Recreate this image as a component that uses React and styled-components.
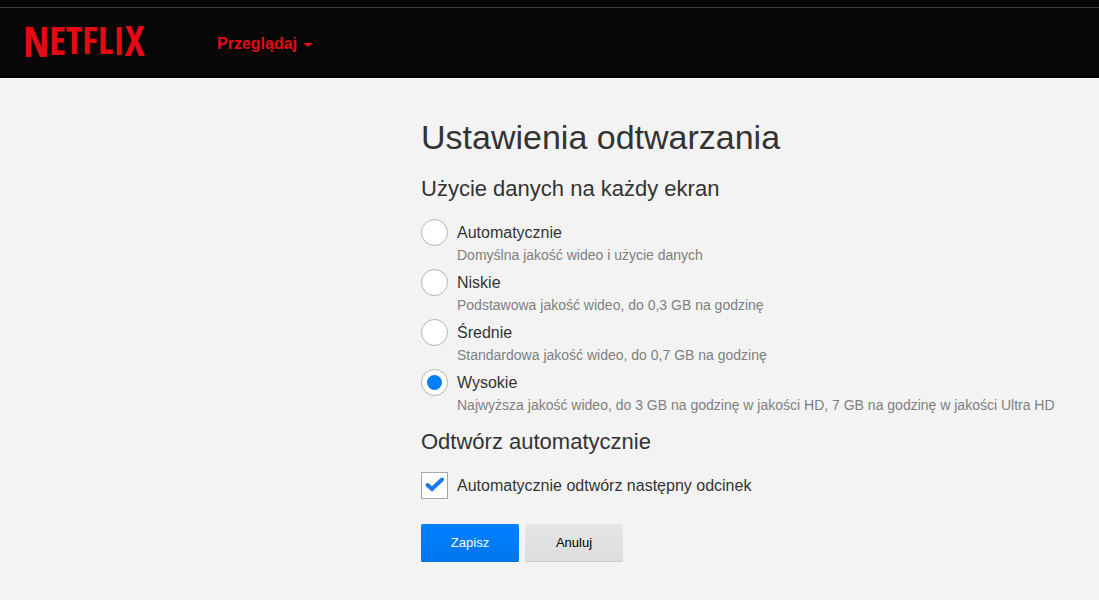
import React, { useState } from "react";
import styled, { createGlobalStyle } from "styled-components";

const colors = {
  header: "#070707",
  headerLine: "#3a3a3a",
  page: "#f3f3f3",
  brand: "#e50914",
  primary: "#0080ff",
  text: "#333333",
  muted: "#808080",
  border: "#b3b3b3",
};

const GlobalStyle = createGlobalStyle`
  * {
    box-sizing: border-box;
  }

  body {
    margin: 0;
    background: ${colors.page};
    color: ${colors.text};
    font-family: "Liberation Sans", Arial, Helvetica, sans-serif;
  }
`;

const TopStrip = styled.div`
  height: 8px;
  background: #050505;
  border-bottom: 1px solid ${colors.headerLine};
`;

const Header = styled.header`
  display: flex;
  align-items: center;
  height: 70px;
  padding: 4px 24px 0;
  background: ${colors.header};
  border-bottom: 2px solid #000000;
`;

const LogoLink = styled.a`
  display: block;
  margin-right: 65px;

  svg {
    display: block;
  }
`;

const LogoText = styled.text`
  fill: ${colors.brand};
  font-family: "Open Sans Condensed", "Roboto Condensed", "Noto Sans Condensed", Lato, sans-serif;
  font-weight: 700;
`;

const BrowseButton = styled.button`
  display: flex;
  align-items: center;
  gap: 6px;
  padding: 0;
  border: 0;
  background: none;
  color: ${colors.brand};
  font-family: inherit;
  font-size: 16px;
  font-weight: 700;
  line-height: 20px;
  cursor: pointer;
`;

const Caret = styled.span`
  margin-top: 2px;
  border: 5px solid transparent;
  border-top: 4px solid ${colors.brand};
  border-bottom: 0;
`;

const Main = styled.main`
  padding: 38px 24px 38px 421px;
`;

const Title = styled.h1`
  margin: 0 0 18px;
  font-size: 34px;
  font-weight: 400;
  line-height: 42px;
`;

const Group = styled.fieldset`
  min-width: 0;
  margin: 0 0 10px;
  padding: 0;
  border: 0;
`;

const GroupTitle = styled.legend`
  margin: 0 0 17px;
  padding: 0;
  font-size: 22px;
  line-height: 26px;
`;

const Option = styled.div`
  margin-bottom: 5px;
`;

const OptionLabel = styled.label`
  display: flex;
  align-items: center;
  gap: 9px;
  font-size: 16px;
  line-height: 27px;
  cursor: pointer;
`;

const Hint = styled.p`
  margin: 0;
  padding-left: 36px;
  color: ${colors.muted};
  font-size: 14px;
  line-height: 18px;
`;

const Radio = styled.input`
  appearance: none;
  display: grid;
  place-items: center;
  flex: none;
  width: 27px;
  height: 27px;
  margin: 0;
  border: 1px solid ${colors.border};
  border-radius: 50%;
  background: #ffffff;
  cursor: pointer;

  &:checked::before {
    content: "";
    width: 15px;
    height: 15px;
    border-radius: 50%;
    background: ${colors.primary};
  }
`;

const CheckWrapper = styled.span`
  display: grid;
  flex: none;

  > * {
    grid-area: 1 / 1;
  }
`;

const Checkbox = styled.input`
  appearance: none;
  width: 27px;
  height: 27px;
  margin: 0;
  border: 1px solid #a6a6a6;
  background: #ffffff;
  cursor: pointer;

  &:not(:checked) + svg {
    display: none;
  }
`;

const CheckMark = styled.svg`
  pointer-events: none;
`;

const Actions = styled.div`
  display: flex;
  gap: 6px;
  margin-top: 25px;
`;

const Button = styled.button`
  min-width: 98px;
  padding: 10px 24px;
  border: 0;
  border-radius: 2px;
  background: ${({ $primary }) =>
    $primary
      ? "linear-gradient(#0080ff, #0077ee)"
      : "linear-gradient(#e6e6e6, #dddddd)"};
  box-shadow: inset 0 -1px 0 ${({ $primary }) => ($primary ? "#0069d2" : "#cccccc")};
  color: ${({ $primary }) => ($primary ? "#ffffff" : "#000000")};
  font-family: inherit;
  font-size: 13px;
  line-height: 18px;
  cursor: pointer;
`;

const qualityOptions = [
  {
    id: "auto",
    label: "Automatycznie",
    hint: "Domyślna jakość wideo i użycie danych",
  },
  {
    id: "low",
    label: "Niskie",
    hint: "Podstawowa jakość wideo, do 0,3 GB na godzinę",
  },
  {
    id: "medium",
    label: "Średnie",
    hint: "Standardowa jakość wideo, do 0,7 GB na godzinę",
  },
  {
    id: "high",
    label: "Wysokie",
    hint: "Najwyższa jakość wideo, do 3 GB na godzinę w jakości HD, 7 GB na godzinę w jakości Ultra HD",
  },
];

function Logo() {
  return (
    <LogoLink href="#">
      <svg width="128" height="64" viewBox="0 0 128 64">
        <LogoText x="-1" y="45" fontSize="38">
          <tspan fontSize="42">N</tspan>
          <tspan dy="-2" fontSize="39">E</tspan>
          <tspan dy="-1">TFL</tspan>
          <tspan dy="1" fontSize="39">I</tspan>
          <tspan dy="1" fontSize="42">X</tspan>
        </LogoText>
      </svg>
    </LogoLink>
  );
}

function App() {
  const [quality, setQuality] = useState("high");
  const [autoplay, setAutoplay] = useState(true);

  return (
    <>
      <GlobalStyle />
      <TopStrip />
      <Header>
        <Logo />
        <BrowseButton type="button">
          Przeglądaj
          <Caret />
        </BrowseButton>
      </Header>

      <Main>
        <Title>Ustawienia odtwarzania</Title>
        <form onSubmit={(e) => e.preventDefault()}>
          <Group>
            <GroupTitle>Użycie danych na każdy ekran</GroupTitle>
            {qualityOptions.map(({ id, label, hint }) => (
              <Option key={id}>
                <OptionLabel htmlFor={id}>
                  <Radio
                    type="radio"
                    id={id}
                    name="quality"
                    aria-describedby={`${id}-hint`}
                    checked={quality === id}
                    onChange={() => setQuality(id)}
                  />
                  {label}
                </OptionLabel>
                <Hint id={`${id}-hint`}>{hint}</Hint>
              </Option>
            ))}
          </Group>

          <Group>
            <GroupTitle>Odtwórz automatycznie</GroupTitle>
            <OptionLabel htmlFor="autoplay">
              <CheckWrapper>
                <Checkbox
                  type="checkbox"
                  id="autoplay"
                  checked={autoplay}
                  onChange={(e) => setAutoplay(e.target.checked)}
                />
                <CheckMark width="27" height="27" viewBox="0 0 27 27">
                  <path
                    d="M6.5 13 L11 17 L21 7.5"
                    fill="none"
                    stroke="#1a78ee"
                    strokeWidth="4"
                    strokeLinecap="round"
                  />
                </CheckMark>
              </CheckWrapper>
              Automatycznie odtwórz następny odcinek
            </OptionLabel>
          </Group>

          <Actions>
            <Button type="submit" $primary>Zapisz</Button>
            <Button type="button">Anuluj</Button>
          </Actions>
        </form>
      </Main>
    </>
  );
}

export default App;
